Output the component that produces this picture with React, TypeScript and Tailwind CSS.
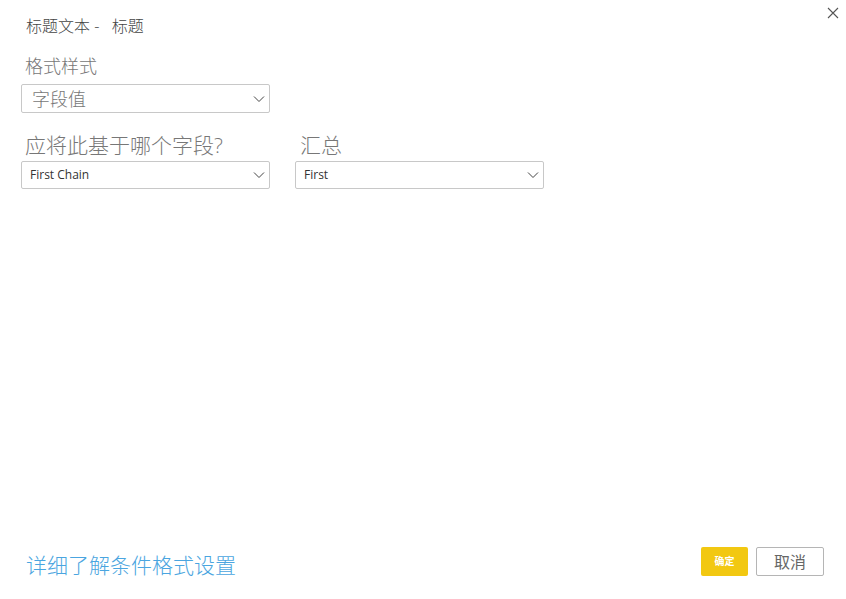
import React from 'react'

const font = { fontFamily: '"Segoe UI", "Open Sans", "Noto Sans CJK SC", sans-serif' }

function Chevron() {
  return (
    <svg width="12" height="8" viewBox="0 0 12 8" className="shrink-0">
      <path d="M1 1.5 L6 6.5 L11 1.5" fill="none" stroke="#444" strokeWidth="1" />
    </svg>
  )
}

function Select({ value, big }: { value: string; big?: boolean }) {
  return (
    <div className={`w-[249px] flex items-center justify-between border border-[#c8c8c8] rounded-[2px] pr-[4px] ${big ? 'h-[29px] pl-[10px]' : 'h-[28px] pl-[8px]'}`}>
      <span className={big ? 'text-[18px] text-[#777] leading-none font-light' : 'text-[12px] text-[#333] leading-none'}>{value}</span>
      <Chevron />
    </div>
  )
}

export default function App() {
  return (
    <div style={font} className="relative w-[846px] h-[599px] bg-white flex flex-col">
      <button className="absolute right-[6px] top-[6px] w-[14px] h-[14px] flex items-center justify-center">
        <svg width="12" height="12" viewBox="0 0 12 12">
          <path d="M1 1 L11 11 M11 1 L1 11" stroke="#555" strokeWidth="1.1" />
        </svg>
      </button>

      <div className="pl-[21px] pt-[16px] flex flex-col">
        <div className="pl-[5px] text-[16px] text-[#444] leading-[20px] font-light">标题文本 -&nbsp;&nbsp; 标题</div>
        <div className="pl-[4px] mt-[18px] text-[18px] text-[#777] leading-[24px] font-light">格式样式</div>
        <div className="mt-[6px]">
          <Select value="字段值" big />
        </div>

        <div className="flex gap-[25px] mt-[19px]">
          <div className="flex flex-col">
            <div className="pl-[4px] text-[21px] text-[#777] leading-[26px] font-light">应将此基于哪个字段?</div>
            <div className="mt-[3px]">
              <Select value="First Chain" />
            </div>
          </div>
          <div className="flex flex-col">
            <div className="pl-[5px] text-[21px] text-[#777] leading-[26px] font-light">汇总</div>
            <div className="mt-[3px]">
              <Select value="First" />
            </div>
          </div>
        </div>
      </div>

      <div className="mt-auto flex items-center justify-between pl-[26px] pr-[22px] pb-[21px]">
        <a className="text-[21px] text-[#4aa5e0] leading-[26px] mt-[12px] font-light">详细了解条件格式设置</a>
        <div className="flex gap-[8px] mt-[5px]">
          <button className="w-[47px] h-[29px] bg-[#f2c811] rounded-[2px] text-white text-[10px] font-bold flex items-center justify-center">确定</button>
          <button className="w-[68px] h-[29px] border border-[#b5b5b5] rounded-[2px] text-[#666] text-[16px] flex items-center justify-center">取消</button>
        </div>
      </div>
    </div>
  )
}
